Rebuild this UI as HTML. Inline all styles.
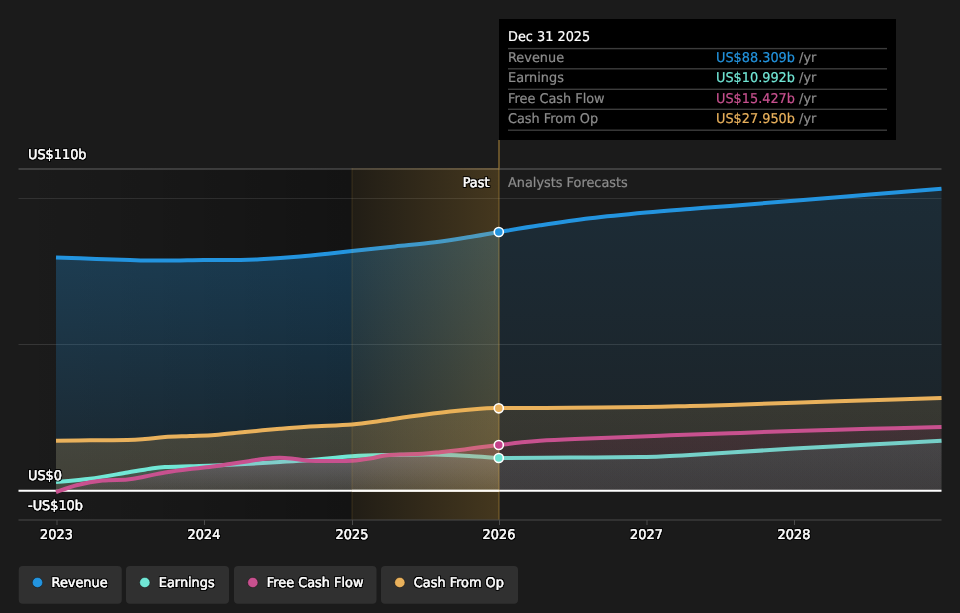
<!DOCTYPE html>
<html><head><meta charset="utf-8"><title>Earnings and Revenue Growth</title>
<style>html,body{margin:0;padding:0;background:#1b1b1b;width:960px;height:613px;overflow:hidden}</style>
</head><body>
<svg width="960" height="613" viewBox="0 0 960 613" style="position:absolute;left:0;top:0;font-family:'DejaVu Sans','Liberation Sans',sans-serif">
<defs>
<linearGradient id="gdark" x1="0" y1="0" x2="1" y2="0"><stop offset="0" stop-color="#000" stop-opacity="0"/><stop offset="1" stop-color="#000" stop-opacity="0.30"/></linearGradient>
<linearGradient id="ggold" x1="0" y1="0" x2="1" y2="0"><stop offset="0" stop-color="#e9b146" stop-opacity="0.07"/><stop offset="1" stop-color="#e9b146" stop-opacity="0.235"/></linearGradient>
<filter id="halo" x="-10%" y="-40%" width="120%" height="180%"><feMorphology in="SourceAlpha" operator="dilate" radius="1" result="d"/><feGaussianBlur in="d" stdDeviation="0.7" result="b"/><feFlood flood-color="#000" flood-opacity="0.95"/><feComposite in2="b" operator="in" result="h"/><feMerge><feMergeNode in="h"/><feMergeNode in="SourceGraphic"/></feMerge></filter>
<linearGradient id="grevp" x1="0" y1="0" x2="0" y2="1"><stop offset="0" stop-color="#2394df" stop-opacity="0.30"/><stop offset="1" stop-color="#2394df" stop-opacity="0.10"/></linearGradient>
<linearGradient id="grevf" x1="0" y1="0" x2="0" y2="1"><stop offset="0" stop-color="#2394df" stop-opacity="0.14"/><stop offset="1" stop-color="#2394df" stop-opacity="0.06"/></linearGradient>
<linearGradient id="gcfo" x1="0" y1="0" x2="0" y2="1"><stop offset="0" stop-color="#e9b15c" stop-opacity="0.21"/><stop offset="1" stop-color="#e9b15c" stop-opacity="0.18"/></linearGradient>
<linearGradient id="gcfof" x1="0" y1="0" x2="0" y2="1"><stop offset="0" stop-color="#e9b15c" stop-opacity="0.14"/><stop offset="1" stop-color="#e9b15c" stop-opacity="0.10"/></linearGradient>
<linearGradient id="gfcfp" x1="0" y1="0" x2="0" y2="1"><stop offset="0" stop-color="#c8518f" stop-opacity="0.24"/><stop offset="1" stop-color="#c8518f" stop-opacity="0.05"/></linearGradient>
<linearGradient id="gearp" x1="0" y1="0" x2="0" y2="1"><stop offset="0" stop-color="#71e7d6" stop-opacity="0.22"/><stop offset="1" stop-color="#71e7d6" stop-opacity="0.05"/></linearGradient>
<linearGradient id="gfcff" x1="0" y1="0" x2="0" y2="1"><stop offset="0" stop-color="#96145a" stop-opacity="0.12"/><stop offset="1" stop-color="#96145a" stop-opacity="0.09"/></linearGradient>
<linearGradient id="gearf" x1="0" y1="0" x2="0" y2="1"><stop offset="0" stop-color="#71e7d6" stop-opacity="0.13"/><stop offset="1" stop-color="#71e7d6" stop-opacity="0.085"/></linearGradient>
</defs>
<rect x="0" y="0" width="960" height="613" fill="#1b1b1b"/>
<rect x="18.5" y="168.5" width="333.5" height="351.5" fill="url(#gdark)"/>
<rect x="352" y="168.5" width="147" height="351.5" fill="#000" opacity="0.30"/>
<rect x="18.5" y="168" width="923" height="2" fill="#fff" opacity="0.16"/>
<rect x="18.5" y="198" width="923" height="1" fill="#fff" opacity="0.10"/>
<rect x="18.5" y="344" width="923" height="1" fill="#fff" opacity="0.12"/>
<path d="M56.00 257.50 C60.00 257.63 71.83 258.00 80.00 258.30 C88.17 258.60 96.67 259.02 105.00 259.30 C113.33 259.58 122.17 259.80 130.00 260.00 C137.83 260.20 144.50 260.42 152.00 260.50 C159.50 260.58 166.33 260.58 175.00 260.50 C183.67 260.42 193.17 260.08 204.00 260.00 C214.83 259.92 230.67 260.12 240.00 260.00 C249.33 259.88 250.00 259.88 260.00 259.30 C270.00 258.72 288.33 257.47 300.00 256.50 C311.67 255.53 321.33 254.42 330.00 253.50 C338.67 252.58 341.17 252.17 352.00 251.00 C362.83 249.83 381.17 247.95 395.00 246.50 C408.83 245.05 422.50 243.88 435.00 242.30 C447.50 240.72 459.33 238.72 470.00 237.00 C480.67 235.28 494.17 232.83 499.00 232.00 L499.00 490.75 L56.00 490.75 Z" fill="url(#grevp)"/>
<path d="M499.00 232.00 C505.83 230.88 524.83 227.58 540.00 225.30 C555.17 223.02 572.33 220.43 590.00 218.30 C607.67 216.17 629.33 214.07 646.00 212.50 C662.67 210.93 676.00 210.00 690.00 208.90 C704.00 207.80 712.67 207.27 730.00 205.90 C747.33 204.53 770.67 202.60 794.00 200.70 C817.33 198.80 845.42 196.48 870.00 194.50 C894.58 192.52 929.58 189.75 941.50 188.80 L941.50 490.75 L499.00 490.75 Z" fill="url(#grevf)"/>
<path d="M56.00 257.50 C60.00 257.63 71.83 258.00 80.00 258.30 C88.17 258.60 96.67 259.02 105.00 259.30 C113.33 259.58 122.17 259.80 130.00 260.00 C137.83 260.20 144.50 260.42 152.00 260.50 C159.50 260.58 166.33 260.58 175.00 260.50 C183.67 260.42 193.17 260.08 204.00 260.00 C214.83 259.92 230.67 260.12 240.00 260.00 C249.33 259.88 250.00 259.88 260.00 259.30 C270.00 258.72 288.33 257.47 300.00 256.50 C311.67 255.53 321.33 254.42 330.00 253.50 C338.67 252.58 341.17 252.17 352.00 251.00 C362.83 249.83 381.17 247.95 395.00 246.50 C408.83 245.05 422.50 243.88 435.00 242.30 C447.50 240.72 459.33 238.72 470.00 237.00 C480.67 235.28 494.17 232.83 499.00 232.00" fill="none" stroke="#2394df" stroke-width="4" stroke-linejoin="round"/>
<path d="M499.00 232.00 C505.83 230.88 524.83 227.58 540.00 225.30 C555.17 223.02 572.33 220.43 590.00 218.30 C607.67 216.17 629.33 214.07 646.00 212.50 C662.67 210.93 676.00 210.00 690.00 208.90 C704.00 207.80 712.67 207.27 730.00 205.90 C747.33 204.53 770.67 202.60 794.00 200.70 C817.33 198.80 845.42 196.48 870.00 194.50 C894.58 192.52 929.58 189.75 941.50 188.80" fill="none" stroke="#2394df" stroke-width="4" stroke-linejoin="round"/>
<path d="M56.00 440.75 C61.67 440.68 78.08 440.43 90.00 440.30 C101.92 440.18 118.33 440.22 127.50 440.00 C136.67 439.78 138.75 439.50 145.00 439.00 C151.25 438.50 157.50 437.50 165.00 437.00 C172.50 436.50 181.67 436.33 190.00 436.00 C198.33 435.67 205.83 435.67 215.00 435.00 C224.17 434.33 234.17 433.04 245.00 432.00 C255.83 430.96 269.17 429.67 280.00 428.75 C290.83 427.83 298.00 427.21 310.00 426.50 C322.00 425.79 340.33 425.42 352.00 424.50 C363.67 423.58 370.33 422.32 380.00 421.00 C389.67 419.68 398.33 418.18 410.00 416.60 C421.67 415.02 438.33 412.82 450.00 411.50 C461.67 410.18 471.83 409.28 480.00 408.70 C488.17 408.12 495.83 408.12 499.00 408.00 L499.00 490.75 L56.00 490.75 Z" fill="url(#gcfo)"/>
<path d="M499.00 408.00 C510.83 407.97 545.50 407.97 570.00 407.80 C594.50 407.63 626.00 407.30 646.00 407.00 C666.00 406.70 676.00 406.33 690.00 406.00 C704.00 405.67 712.67 405.55 730.00 405.00 C747.33 404.45 770.67 403.48 794.00 402.70 C817.33 401.92 845.42 401.08 870.00 400.30 C894.58 399.52 929.58 398.38 941.50 398.00 L941.50 490.75 L499.00 490.75 Z" fill="url(#gcfof)"/>
<path d="M56.00 440.75 C61.67 440.68 78.08 440.43 90.00 440.30 C101.92 440.18 118.33 440.22 127.50 440.00 C136.67 439.78 138.75 439.50 145.00 439.00 C151.25 438.50 157.50 437.50 165.00 437.00 C172.50 436.50 181.67 436.33 190.00 436.00 C198.33 435.67 205.83 435.67 215.00 435.00 C224.17 434.33 234.17 433.04 245.00 432.00 C255.83 430.96 269.17 429.67 280.00 428.75 C290.83 427.83 298.00 427.21 310.00 426.50 C322.00 425.79 340.33 425.42 352.00 424.50 C363.67 423.58 370.33 422.32 380.00 421.00 C389.67 419.68 398.33 418.18 410.00 416.60 C421.67 415.02 438.33 412.82 450.00 411.50 C461.67 410.18 471.83 409.28 480.00 408.70 C488.17 408.12 495.83 408.12 499.00 408.00" fill="none" stroke="#e9b15c" stroke-width="4" stroke-linejoin="round"/>
<path d="M499.00 408.00 C510.83 407.97 545.50 407.97 570.00 407.80 C594.50 407.63 626.00 407.30 646.00 407.00 C666.00 406.70 676.00 406.33 690.00 406.00 C704.00 405.67 712.67 405.55 730.00 405.00 C747.33 404.45 770.67 403.48 794.00 402.70 C817.33 401.92 845.42 401.08 870.00 400.30 C894.58 399.52 929.58 398.38 941.50 398.00" fill="none" stroke="#e9b15c" stroke-width="4" stroke-linejoin="round"/>
<path d="M56.00 482.00 C61.67 481.46 78.08 480.33 90.00 478.75 C101.92 477.17 117.50 474.16 127.50 472.50 C137.50 470.84 143.75 469.72 150.00 468.80 C156.25 467.88 158.33 467.43 165.00 467.00 C171.67 466.57 181.67 466.45 190.00 466.20 C198.33 465.95 205.83 465.87 215.00 465.50 C224.17 465.13 234.17 464.58 245.00 464.00 C255.83 463.42 269.17 462.67 280.00 462.00 C290.83 461.33 298.00 460.96 310.00 460.00 C322.00 459.04 339.50 457.08 352.00 456.25 C364.50 455.42 371.17 455.29 385.00 455.00 C398.83 454.71 420.42 454.29 435.00 454.50 C449.58 454.71 461.83 455.67 472.50 456.25 C483.17 456.83 494.58 457.71 499.00 458.00 L499.00 490.75 L56.00 490.75 Z" fill="url(#gearp)"/>
<path d="M499.00 458.00 C510.83 457.93 546.50 457.77 570.00 457.60 C593.50 457.43 624.17 457.22 640.00 457.00 C655.83 456.78 656.67 456.63 665.00 456.30 C673.33 455.97 679.17 455.63 690.00 455.00 C700.83 454.37 712.67 453.58 730.00 452.50 C747.33 451.42 770.67 449.83 794.00 448.50 C817.33 447.17 845.42 445.79 870.00 444.50 C894.58 443.21 929.58 441.38 941.50 440.75 L941.50 490.75 L499.00 490.75 Z" fill="url(#gearf)"/>
<path d="M56.00 482.00 C61.67 481.46 78.08 480.33 90.00 478.75 C101.92 477.17 117.50 474.16 127.50 472.50 C137.50 470.84 143.75 469.72 150.00 468.80 C156.25 467.88 158.33 467.43 165.00 467.00 C171.67 466.57 181.67 466.45 190.00 466.20 C198.33 465.95 205.83 465.87 215.00 465.50 C224.17 465.13 234.17 464.58 245.00 464.00 C255.83 463.42 269.17 462.67 280.00 462.00 C290.83 461.33 298.00 460.96 310.00 460.00 C322.00 459.04 339.50 457.08 352.00 456.25 C364.50 455.42 371.17 455.29 385.00 455.00 C398.83 454.71 420.42 454.29 435.00 454.50 C449.58 454.71 461.83 455.67 472.50 456.25 C483.17 456.83 494.58 457.71 499.00 458.00" fill="none" stroke="#71e7d6" stroke-width="4" stroke-linejoin="round"/>
<path d="M499.00 458.00 C510.83 457.93 546.50 457.77 570.00 457.60 C593.50 457.43 624.17 457.22 640.00 457.00 C655.83 456.78 656.67 456.63 665.00 456.30 C673.33 455.97 679.17 455.63 690.00 455.00 C700.83 454.37 712.67 453.58 730.00 452.50 C747.33 451.42 770.67 449.83 794.00 448.50 C817.33 447.17 845.42 445.79 870.00 444.50 C894.58 443.21 929.58 441.38 941.50 440.75" fill="none" stroke="#71e7d6" stroke-width="4" stroke-linejoin="round"/>
<path d="M56.00 492.00 C59.58 490.83 69.75 486.92 77.50 485.00 C85.25 483.08 94.17 481.42 102.50 480.50 C110.83 479.58 120.42 480.17 127.50 479.50 C134.58 478.83 138.75 477.67 145.00 476.50 C151.25 475.33 157.50 473.75 165.00 472.50 C172.50 471.25 181.67 470.04 190.00 469.00 C198.33 467.96 206.67 467.33 215.00 466.25 C223.33 465.17 231.67 463.75 240.00 462.50 C248.33 461.25 258.33 459.55 265.00 458.75 C271.67 457.95 275.00 457.66 280.00 457.70 C285.00 457.74 290.00 458.49 295.00 459.00 C300.00 459.51 304.17 460.42 310.00 460.75 C315.83 461.08 323.00 461.00 330.00 461.00 C337.00 461.00 345.33 461.17 352.00 460.75 C358.67 460.33 364.50 459.38 370.00 458.50 C375.50 457.62 380.00 456.17 385.00 455.50 C390.00 454.83 393.75 454.79 400.00 454.50 C406.25 454.21 415.83 454.13 422.50 453.75 C429.17 453.37 433.75 452.82 440.00 452.20 C446.25 451.57 453.33 450.82 460.00 450.00 C466.67 449.18 473.50 448.13 480.00 447.30 C486.50 446.47 495.83 445.38 499.00 445.00 L499.00 490.75 L56.00 490.75 Z" fill="url(#gfcfp)"/>
<path d="M499.00 445.00 C502.50 444.58 513.17 443.21 520.00 442.50 C526.83 441.79 530.83 441.33 540.00 440.75 C549.17 440.17 562.50 439.54 575.00 439.00 C587.50 438.46 599.17 438.12 615.00 437.50 C630.83 436.88 650.83 436.01 670.00 435.30 C689.17 434.59 709.33 433.97 730.00 433.25 C750.67 432.53 770.67 431.74 794.00 431.00 C817.33 430.26 845.42 429.47 870.00 428.80 C894.58 428.13 929.58 427.30 941.50 427.00 L941.50 490.75 L499.00 490.75 Z" fill="url(#gfcff)"/>
<rect x="18.5" y="489.75" width="923" height="2" fill="#ffffff"/>
<path d="M56.00 492.00 C59.58 490.83 69.75 486.92 77.50 485.00 C85.25 483.08 94.17 481.42 102.50 480.50 C110.83 479.58 120.42 480.17 127.50 479.50 C134.58 478.83 138.75 477.67 145.00 476.50 C151.25 475.33 157.50 473.75 165.00 472.50 C172.50 471.25 181.67 470.04 190.00 469.00 C198.33 467.96 206.67 467.33 215.00 466.25 C223.33 465.17 231.67 463.75 240.00 462.50 C248.33 461.25 258.33 459.55 265.00 458.75 C271.67 457.95 275.00 457.66 280.00 457.70 C285.00 457.74 290.00 458.49 295.00 459.00 C300.00 459.51 304.17 460.42 310.00 460.75 C315.83 461.08 323.00 461.00 330.00 461.00 C337.00 461.00 345.33 461.17 352.00 460.75 C358.67 460.33 364.50 459.38 370.00 458.50 C375.50 457.62 380.00 456.17 385.00 455.50 C390.00 454.83 393.75 454.79 400.00 454.50 C406.25 454.21 415.83 454.13 422.50 453.75 C429.17 453.37 433.75 452.82 440.00 452.20 C446.25 451.57 453.33 450.82 460.00 450.00 C466.67 449.18 473.50 448.13 480.00 447.30 C486.50 446.47 495.83 445.38 499.00 445.00" fill="none" stroke="#c8518f" stroke-width="4" stroke-linejoin="round"/>
<path d="M499.00 445.00 C502.50 444.58 513.17 443.21 520.00 442.50 C526.83 441.79 530.83 441.33 540.00 440.75 C549.17 440.17 562.50 439.54 575.00 439.00 C587.50 438.46 599.17 438.12 615.00 437.50 C630.83 436.88 650.83 436.01 670.00 435.30 C689.17 434.59 709.33 433.97 730.00 433.25 C750.67 432.53 770.67 431.74 794.00 431.00 C817.33 430.26 845.42 429.47 870.00 428.80 C894.58 428.13 929.58 427.30 941.50 427.00" fill="none" stroke="#c8518f" stroke-width="4" stroke-linejoin="round"/>
<rect x="352" y="168" width="147" height="352" fill="url(#ggold)"/>
<rect x="351" y="168" width="2" height="352" fill="#e9b146" opacity="0.08"/>
<rect x="352" y="168" width="147" height="2" fill="#e9b146" opacity="0.05"/>
<rect x="498" y="140" width="2" height="28" fill="#e9b146" opacity="0.36"/>
<rect x="498.2" y="168" width="1.7" height="352" fill="#e9b146" opacity="0.26"/>
<rect x="352" y="489.75" width="147" height="2" fill="#ffffff" opacity="0.8"/>
<rect x="18.5" y="519.5" width="923" height="1" fill="#4b4b4b"/>
<rect x="56.5" y="520" width="1" height="5" fill="#4a4a4a"/>
<rect x="204.0" y="520" width="1" height="5" fill="#4a4a4a"/>
<rect x="352.0" y="520" width="1" height="5" fill="#4a4a4a"/>
<rect x="499.0" y="520" width="1" height="5" fill="#4a4a4a"/>
<rect x="646.5" y="520" width="1" height="5" fill="#4a4a4a"/>
<rect x="794.0" y="520" width="1" height="5" fill="#4a4a4a"/>
<circle cx="498.8" cy="232.00" r="4.55" fill="#2394df" stroke="#fff" stroke-width="1.6"/>
<circle cx="498.8" cy="408.30" r="4.55" fill="#e9b15c" stroke="#fff" stroke-width="1.6"/>
<circle cx="498.8" cy="445.00" r="4.55" fill="#c4418a" stroke="#fff" stroke-width="1.6"/>
<circle cx="498.8" cy="458.00" r="4.55" fill="#6be3d2" stroke="#fff" stroke-width="1.6"/>
<rect x="499" y="19" width="397" height="121" fill="#000"/>
<rect x="508" y="47.90" width="379" height="1.4" fill="#3c3c3c"/>
<rect x="508" y="68.10" width="379" height="1.4" fill="#3c3c3c"/>
<rect x="508" y="88.60" width="379" height="1.4" fill="#3c3c3c"/>
<rect x="508" y="108.60" width="379" height="1.4" fill="#3c3c3c"/>
<rect x="508" y="129.50" width="379" height="1.4" fill="#3c3c3c"/>
<rect x="18.75" y="566" width="103.0" height="37.75" rx="4" fill="#303030"/>
<circle cx="37.5" cy="582.5" r="5.1" fill="#2394df" stroke="#000" stroke-opacity="0.3" stroke-width="1"/>
<rect x="126.00" y="566" width="103.0" height="37.75" rx="4" fill="#303030"/>
<circle cx="144.8" cy="582.5" r="5.1" fill="#71e7d6" stroke="#000" stroke-opacity="0.3" stroke-width="1"/>
<rect x="234.00" y="566" width="142.5" height="37.75" rx="4" fill="#303030"/>
<circle cx="252.8" cy="582.5" r="5.1" fill="#c8518f" stroke="#000" stroke-opacity="0.3" stroke-width="1"/>
<rect x="381.00" y="566" width="137.0" height="37.75" rx="4" fill="#303030"/>
<circle cx="399.8" cy="582.5" r="5.1" fill="#e9b15c" stroke="#000" stroke-opacity="0.3" stroke-width="1"/>
<g style="will-change:transform;font-size:13px;text-rendering:geometricPrecision">
<g fill="#fff" stroke="#fff" stroke-width="0.2" filter="url(#halo)">
<text transform="translate(28.00 159.00) scale(0.99 1.03)" >US$110b</text>
<text transform="translate(28.00 480.00) scale(0.99 1.03)" >US$0</text>
<text transform="translate(28.00 510.00) scale(0.99 1.03)" >-US$10b</text>
<text transform="translate(56.50 539.00) scale(0.99 1.03)" text-anchor="middle">2023</text>
<text transform="translate(204.00 539.00) scale(0.99 1.03)" text-anchor="middle">2024</text>
<text transform="translate(352.00 539.00) scale(0.99 1.03)" text-anchor="middle">2025</text>
<text transform="translate(499.00 539.00) scale(0.99 1.03)" text-anchor="middle">2026</text>
<text transform="translate(646.50 539.00) scale(0.99 1.03)" text-anchor="middle">2027</text>
<text transform="translate(794.00 539.00) scale(0.99 1.03)" text-anchor="middle">2028</text>
<text transform="translate(489.50 187.00) scale(0.99 1.03)" text-anchor="end">Past</text>
<text transform="translate(51.55 587.00) scale(0.99 1.03)" >Revenue</text>
<text transform="translate(158.80 587.00) scale(0.99 1.03)" >Earnings</text>
<text transform="translate(266.80 587.00) scale(0.99 1.03)" >Free Cash Flow</text>
<text transform="translate(413.80 587.00) scale(0.99 1.03)" >Cash From Op</text>
</g>
<g stroke-width="0.22">
<text transform="translate(508.00 187.00) scale(0.99 1.03)" fill="#8c8c8c" stroke="#8c8c8c">Analysts Forecasts</text>
<text transform="translate(508.00 41.00) scale(0.99 1.03)" fill="#fff" stroke="#fff">Dec 31 2025</text>
<text transform="translate(508.00 62.00) scale(0.99 1.03)" fill="#8c8c8c" stroke="#8c8c8c">Revenue</text>
<text transform="translate(716.00 62.00) scale(0.99 1.03)" fill="#2394df" stroke="#2394df">US$88.309b<tspan fill="#8c8c8c" stroke="#8c8c8c"> /yr</tspan></text>
<text transform="translate(508.00 82.00) scale(0.99 1.03)" fill="#8c8c8c" stroke="#8c8c8c">Earnings</text>
<text transform="translate(716.00 82.00) scale(0.99 1.03)" fill="#71e7d6" stroke="#71e7d6">US$10.992b<tspan fill="#8c8c8c" stroke="#8c8c8c"> /yr</tspan></text>
<text transform="translate(508.00 103.00) scale(0.99 1.03)" fill="#8c8c8c" stroke="#8c8c8c">Free Cash Flow</text>
<text transform="translate(716.00 103.00) scale(0.99 1.03)" fill="#c8518f" stroke="#c8518f">US$15.427b<tspan fill="#8c8c8c" stroke="#8c8c8c"> /yr</tspan></text>
<text transform="translate(508.00 123.00) scale(0.99 1.03)" fill="#8c8c8c" stroke="#8c8c8c">Cash From Op</text>
<text transform="translate(716.00 123.00) scale(0.99 1.03)" fill="#e9b15c" stroke="#e9b15c">US$27.950b<tspan fill="#8c8c8c" stroke="#8c8c8c"> /yr</tspan></text>
</g>
</g>
</svg>
</body></html>
